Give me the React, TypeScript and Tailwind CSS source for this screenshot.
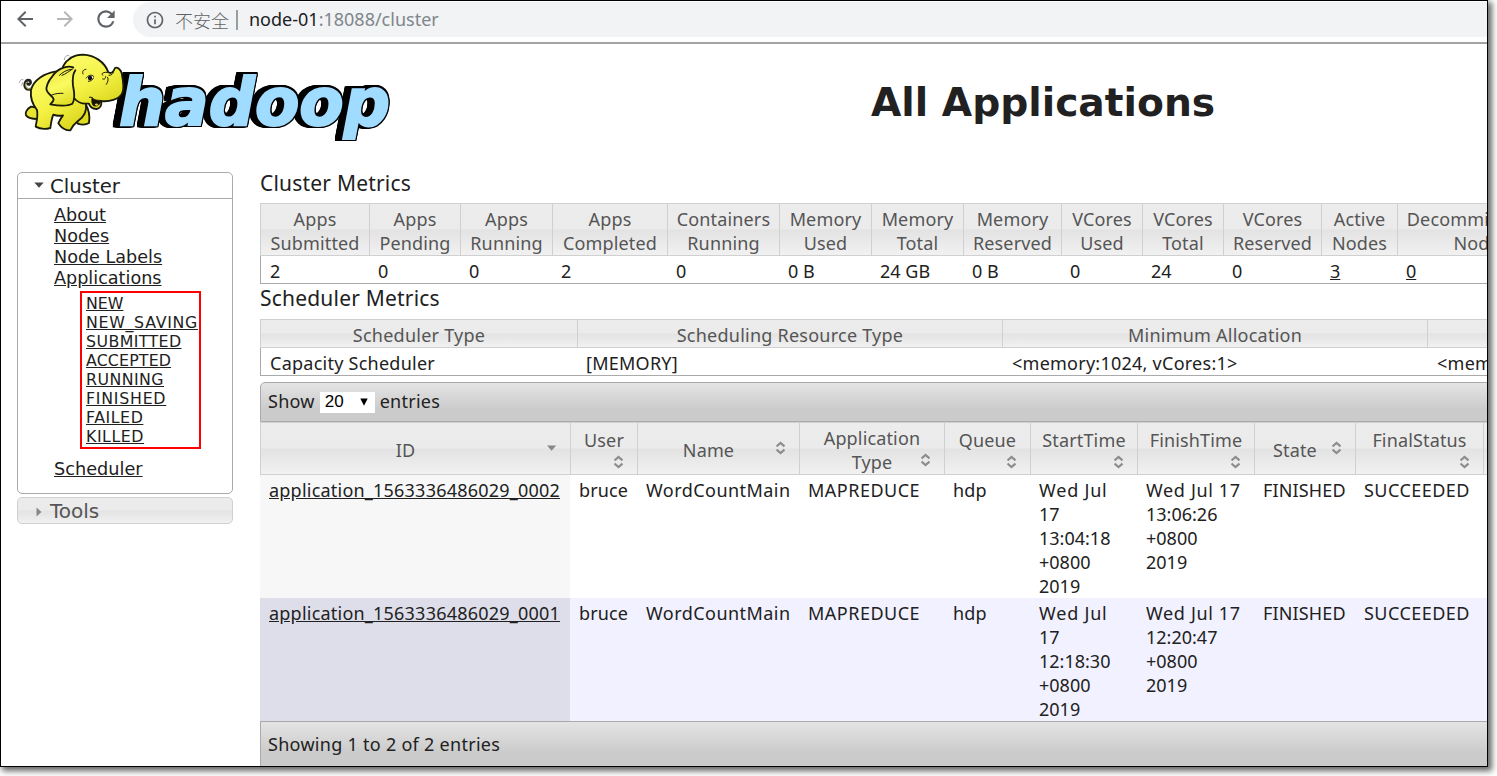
import React from "react";
import { MdArrowBack, MdArrowForward, MdInfoOutline, MdRefresh } from "react-icons/md";

const HEAD_BG =
  "bg-[linear-gradient(to_bottom,#ececec_0%,#ebebeb_48%,#e3e3e3_52%,#f1f1f1_100%)]";
const BAR_BG = "bg-[linear-gradient(to_bottom,#e4e4e4_0%,#cbcbcb_70%,#cbcbcb_100%)]";

const clusterMetrics = [
  { head: "Apps\nSubmitted", value: "2" },
  { head: "Apps\nPending", value: "0" },
  { head: "Apps\nRunning", value: "0" },
  { head: "Apps\nCompleted", value: "2" },
  { head: "Containers\nRunning", value: "0" },
  { head: "Memory\nUsed", value: "0 B" },
  { head: "Memory\nTotal", value: "24 GB" },
  { head: "Memory\nReserved", value: "0 B" },
  { head: "VCores\nUsed", value: "0" },
  { head: "VCores\nTotal", value: "24" },
  { head: "VCores\nReserved", value: "0" },
  { head: "Active\nNodes", value: "3", link: true },
  { head: "Decommissioned\nNodes", value: "0", link: true },
];

const schedulerMetrics = [
  { head: "Scheduler Type", value: "Capacity Scheduler" },
  { head: "Scheduling Resource Type", value: "[MEMORY]" },
  { head: "Minimum Allocation", value: "<memory:1024, vCores:1>" },
  { head: "", value: "<memory:8192, vCores:8>" },
];

type Kind = "row" | "stack" | "over";
const appColumns: { label: string; kind: Kind; sorted?: boolean }[] = [
  { label: "ID", kind: "row", sorted: true },
  { label: "User", kind: "stack" },
  { label: "Name", kind: "row" },
  { label: "Application\nType", kind: "over" },
  { label: "Queue", kind: "stack" },
  { label: "StartTime", kind: "stack" },
  { label: "FinishTime", kind: "stack" },
  { label: "State", kind: "row" },
  { label: "FinalStatus", kind: "stack" },
];

const apps = [
  {
    id: "application_1563336486029_0002",
    cells: ["bruce", "WordCountMain", "MAPREDUCE", "hdp", "Wed Jul\n17\n13:04:18\n+0800\n2019", "Wed Jul 17\n13:06:26\n+0800\n2019", "FINISHED", "SUCCEEDED"],
    idBg: "bg-[#f7f7f7]",
    bg: "bg-white",
  },
  {
    id: "application_1563336486029_0001",
    cells: ["bruce", "WordCountMain", "MAPREDUCE", "hdp", "Wed Jul\n17\n12:18:30\n+0800\n2019", "Wed Jul 17\n12:20:47\n+0800\n2019", "FINISHED", "SUCCEEDED"],
    idBg: "bg-[#dedeea]",
    bg: "bg-[#f1f1ff]",
  },
];

const CELL_SPACING = [
  "tracking-[0.1px]",
  "tracking-[0.45px]",
  "tracking-[0.5px]",
  "tracking-[0.2px]",
  "first-line:tracking-[0.8px]",
  "first-line:tracking-[0.65px]",
  "tracking-[0.15px]",
  "tracking-[0.45px]",
];

const APP_GRID =
  "grid grid-cols-[310px_67px_162px_145px_86px_107px_117px_101px_128px_60px]";

function SortIcon() {
  return (
    <svg className="block h-[14px] w-[10px] shrink-0" viewBox="0 0 10 14" fill="none" stroke="#8c8c8c" strokeWidth="2.1">
      <path d="M0.5 5.4 4.5 2 8.5 5.4M0.5 8.6 4.5 12 8.5 8.6" />
    </svg>
  );
}

function SortedIcon() {
  return (
    <svg className="block h-[14px] w-[10px] shrink-0" viewBox="0 0 10 14" fill="#888">
      <path d="M0 4.5h9.2L4.6 9.8z" />
    </svg>
  );
}

function HeaderCell({ label, kind, sorted }: { label: string; kind: Kind; sorted?: boolean }) {
  if (kind === "stack") {
    return (
      <div className="flex flex-col border-l border-[#d0d0d0] pt-[5px]">
        <span className="text-center">{label}</span>
        <span className="mt-[3px] self-end pr-[13px]">
          <SortIcon />
        </span>
      </div>
    );
  }
  if (kind === "over") {
    return (
      <div className="relative border-l border-[#d0d0d0] pt-[3px] text-center whitespace-pre-line">
        {label}
        <span className="absolute right-[13px] bottom-[7px]">
          <SortIcon />
        </span>
      </div>
    );
  }
  return (
    <div className="flex items-center border-l border-[#d0d0d0] pr-[13px] pb-[2px]">
      <span className="flex-1 pt-1 pl-[3px] text-center">{label}</span>
      {sorted ? <SortedIcon /> : <SortIcon />}
    </div>
  );
}

function Elephant() {
  return (
    <g transform="translate(-1 0) scale(0.33333)" stroke="#1a1a08" strokeWidth="5.5" strokeLinejoin="round" strokeLinecap="round">
      <path d="M66 132C50 138 43 124 50 110C54 103 64 104 65 112C65 119 58 120 56 116" fill="none" stroke="#222" strokeWidth="8" />
      <path d="M66 131C52 135 47 124 52 112" fill="none" stroke="#e8e552" strokeWidth="2.5" />
      <path d="M200 200L206 236C218 240 232 239 240 234C243 215 240 195 230 178Z" fill="#dfdc20" />
      <path d="M66 185C54 192 47 203 51 211C58 220 70 222 86 222L96 190Z" fill="#e6e333" />
      <path
        d="M138 80C105 86 74 104 66 135C63 160 72 180 84 195C88 214 82 230 80 245C92 252 110 253 124 249C126 234 128 220 133 209C143 213 153 213 162 211C156 219 151 226 148 235C157 249 171 257 184 256C190 244 197 236 206 229C222 218 234 200 231 178L240 120L180 75Z"
        fill="url(#hide)"
      />
      <path
        d="M162 64C176 39 197 29 222 29C258 31 287 51 298 82C308 88 314 79 318 69C324 65 334 72 338 84C342 104 347 133 339 146C329 164 300 171 276 168C280 181 273 190 263 192C250 191 242 184 240 176L231 176C218 177 203 169 195 159Z"
        fill="url(#hide)"
      />
      <path d="M249 159C257 165 265 166 275 166C276 177 265 187 253 182C248 175 247 169 249 159Z" fill="#171405" strokeWidth="2" />
      <path d="M257 178C262 173 267 176 268 180C264 184 260 183 257 178Z" fill="#d5c95b" stroke="none" />
      <path
        d="M193 67C170 60 143 73 130 94C117 108 110 128 113 136C118 151 132 152 134 163C133 170 127 174 124 178C142 181 173 186 190 176C201 160 195 139 192 122C190 104 191 88 199 76"
        fill="url(#ear)"
      />
      <path d="M187 73C174 74 160 82 151 91M192 71C180 79 169 88 159 91M126 151C141 144 154 145 162 145" fill="none" strokeWidth="3" />
      <path d="M222 87C219 79 222 74 231 73M241 157C244 155 248 156 252 160M295 82C283 81 275 85 281 91M281 102C288 105 290 98 290 94M296 97C299 102 297 112 292 118M300 91C308 91 311 87 313 82" fill="none" strokeWidth="3" />
      <ellipse cx="244" cy="99" rx="9" ry="7" fill="#fff" stroke="none" transform="rotate(20 244 99)" />
      <path d="M232 99C236 91 247 87 254 94M238 109C247 108 251 105 253 99" fill="none" strokeWidth="3" />
      <circle cx="243" cy="99" r="6.5" fill="#111" stroke="none" />
      <path d="M166 44C166 36 171 31 179 31M176 43L183 35M31 113C33 105 37 102 42 104M38 121L41 112" fill="none" stroke="#aaa" strokeWidth="3" />
    </g>
  );
}

function Logo() {
  return (
    <svg className="block h-[105px] w-[400px] overflow-visible" viewBox="0 0 400 105">
      <defs>
        <linearGradient id="hide" x1="0" y1="0" x2="0.6" y2="1">
          <stop offset="0" stopColor="#fdfd72" />
          <stop offset="0.6" stopColor="#f4f144" />
          <stop offset="1" stopColor="#dcd820" />
        </linearGradient>
        <linearGradient id="ear" x1="0.3" y1="0" x2="0.6" y2="1">
          <stop offset="0" stopColor="#e9e63c" />
          <stop offset="0.5" stopColor="#fafa62" />
          <stop offset="1" stopColor="#e0dc22" />
        </linearGradient>
      </defs>
      <text
        x="109"
        y="79.5"
        textLength="271"
        lengthAdjust="spacingAndGlyphs"
        className="fill-[#a0dcff] stroke-[#a0dcff] font-['DejaVu_Sans'] text-[65px] font-bold italic [filter:drop-shadow(1.3px_0_0_#000)_drop-shadow(-1.3px_0_0_#000)_drop-shadow(0_1.3px_0_#000)_drop-shadow(0_-1.3px_0_#000)_drop-shadow(-2px_0_0_#000)_drop-shadow(-3px_0_0_#000)]"
        strokeWidth="2"
        strokeLinejoin="miter"
      >
        hadoop
      </text>
      <Elephant />
    </svg>
  );
}

function Sidebar() {
  const states = [
    { t: "NEW", c: "tracking-[0px]" },
    { t: "NEW_SAVING", c: "tracking-[0.7px]" },
    { t: "SUBMITTED", c: "tracking-[0.4px]" },
    { t: "ACCEPTED", c: "tracking-[0.15px]" },
    { t: "RUNNING", c: "tracking-[0.45px]" },
    { t: "FINISHED", c: "tracking-[0.75px]" },
    { t: "FAILED", c: "tracking-[0.55px]" },
    { t: "KILLED", c: "tracking-[0.55px]" },
  ];
  return (
    <aside className="ml-4 w-[216px] shrink-0 font-['DejaVu_Sans',sans-serif] text-[#212121]">
      <div className="h-[322px] rounded-[5px] border border-[#aaa]">
        <div className="flex h-[26px] items-center border-b border-[#aaa] pt-[2px] pl-4 text-[19.7px]">
          <svg className="mr-[6px] mb-[3px] block h-[6px] w-[10px]" viewBox="0 0 10 6" fill="#454545">
            <path d="M0.3 0.5h9.4L5 5.7z" />
          </svg>
          Cluster
        </div>
        <ul className="pt-[6px] pl-9 text-[17.6px] leading-[21px]">
          {["About", "Nodes", "Node Labels", "Applications"].map((t) => (
            <li key={t}>
              <a className="underline">{t}</a>
            </li>
          ))}
        </ul>
        <ul className="mt-[2px] ml-[62px] h-[158px] w-[121px] border-2 border-[#f00] pt-[1px] pl-1 text-[15.8px] leading-[19px]">
          {states.map((s) => (
            <li key={s.t} className={s.c}>
              <a className="underline">{s.t}</a>
            </li>
          ))}
        </ul>
        <div className="mt-[10px] pl-9 text-[17.7px] leading-[21px]">
          <a className="underline">Scheduler</a>
        </div>
      </div>
      <div className={`mt-[3px] flex h-[27px] items-center rounded-[5px] border border-[#d0d0d0] pl-[18px] text-[20px] text-[#555] ${HEAD_BG}`}>
        <svg className="mt-[2px] mr-[8px] block h-[10px] w-[6px]" viewBox="0 0 6 10" fill="#888">
          <path d="M0.5 0.5v9L5.5 5z" />
        </svg>
        Tools
      </div>
    </aside>
  );
}

export default function App() {
  return (
    <div className="h-[776px] w-[1497px] overflow-hidden bg-white font-['Noto_Sans','Noto_Sans_CJK_SC',sans-serif] text-[18px] leading-6 text-[#212121]">
      <div className="flex h-[767px] w-[1488px] flex-col overflow-hidden border border-black bg-white shadow-[3px_3px_6px_1px_rgba(0,0,0,0.6)]">
        <header className="flex h-[43px] shrink-0 items-start border-b-2 border-[#a3a3a3] pt-[1px]">
          <div className="flex h-[34px] w-[132px] items-center pl-[12px] text-[#5f6368]">
            <MdArrowBack size={24} />
            <MdArrowForward size={24} className="ml-[16px] text-[#b4b6b8]" />
            <MdRefresh size={26} className="ml-[16px]" />
          </div>
          <div className="flex h-[35px] flex-1 items-center rounded-l-full bg-[#f1f3f4] pl-[12px] text-[#5f6368]">
            <MdInfoOutline size={20} />
            <span className="ml-[10px] font-['Noto_Sans_CJK_SC',sans-serif] text-[18px] font-light">不安全</span>
            <span className="ml-[7px] h-5 w-[2px] bg-[#9a9da0]" />
            <span className="mb-[2px] ml-[11px] text-[#80868b]">
              <span className="text-[#202124]">node-01</span>:18088/cluster
            </span>
          </div>
        </header>
        <div className="flex h-[128px] shrink-0 pt-[1px]">
          <div className="ml-[9px] w-[390px]">
            <Logo />
          </div>
          <h1 className="ml-[471px] pt-[34px] font-['DejaVu_Sans',sans-serif] text-[39.2px] leading-[48px] font-bold whitespace-nowrap">
            All Applications
          </h1>
        </div>
        <div className="flex flex-1">
          <Sidebar />
          <main className="ml-[27px] w-[1227px] shrink-0 overflow-hidden whitespace-nowrap">
            <h2 className="-mt-[1px] h-[32px] text-[21px] tracking-[0.2px]">Cluster Metrics</h2>
            <section className="w-[1304px]">
              <div className={`grid h-[53px] grid-cols-[109px_91px_92px_115px_112px_92px_92px_98px_81px_81px_98px_76px_167px] border-y border-[#d0d0d0] tracking-[0.15px] text-[#555] ${HEAD_BG}`}>
                {clusterMetrics.map((m) => (
                  <div key={m.head} className="border-l border-[#d0d0d0] pt-[3px] text-center whitespace-pre-line">
                    {m.head}
                  </div>
                ))}
              </div>
              <div className="grid h-7 grid-cols-[108px_91px_92px_115px_112px_92px_92px_98px_81px_81px_98px_76px_167px] border-b border-l border-[#aaa] pt-[3px]">
                {clusterMetrics.map((m) => (
                  <div key={m.head} className="pl-[9px]">
                    {m.link ? <a className="underline">{m.value}</a> : m.value}
                  </div>
                ))}
              </div>
            </section>
            <h2 className="h-[35px] pt-[2px] text-[21px] tracking-[0.2px]">Scheduler Metrics</h2>
            <section className="w-[1742px]">
              <div className={`grid h-[29px] grid-cols-[317px_425px_425px_425px] border-y border-[#d0d0d0] tracking-[0.24px] text-[#555] ${HEAD_BG}`}>
                {schedulerMetrics.map((m) => (
                  <div key={m.value} className="border-l border-[#d0d0d0] pt-[3px] text-center">
                    {m.head}
                  </div>
                ))}
              </div>
              <div className="grid h-7 grid-cols-[316px_426px_425px_425px] border-b border-l border-[#aaa] pt-[3px] tracking-[0.25px]">
                {schedulerMetrics.map((m) => (
                  <div key={m.value} className="pl-[9px]">
                    {m.value}
                  </div>
                ))}
              </div>
            </section>
            <section className="mt-[6px] w-[1283px]">
              <div className={`flex h-10 items-center rounded-tl-[5px] border border-[#aaa] pb-[2px] pl-[7px] tracking-[0.25px] ${BAR_BG}`}>
                Show
                <div className="mx-[5px] mt-[2px] flex h-[21px] w-[55px] items-center justify-between bg-white pr-[7px] pl-[5px] font-['Liberation_Sans',sans-serif] text-[17px] tracking-normal text-black">
                  20
                  <svg className="block h-[8px] w-[8px]" viewBox="0 0 8 8">
                    <path d="M0.3 0.5h7.4L4 7.8z" />
                  </svg>
                </div>
                entries
              </div>
              <div className={`h-[53px] border-y border-[#d0d0d0] tracking-[0.15px] text-[#555] ${APP_GRID} ${HEAD_BG}`}>
                {appColumns.map((c) => (
                  <HeaderCell key={c.label} {...c} />
                ))}
                <div className="border-l border-[#d0d0d0]" />
              </div>
              {apps.map((a) => (
                <div key={a.id} className={`h-[123px] ${APP_GRID} ${a.bg}`}>
                  <div className={`pt-[3px] pl-[9px] tracking-[0.22px] ${a.idBg}`}>
                    <a className="underline">{a.id}</a>
                  </div>
                  {a.cells.map((c, i) => (
                    <div key={i} className={`pt-[3px] pl-[9px] whitespace-pre-line ${CELL_SPACING[i]}`}>
                      {c}
                    </div>
                  ))}
                </div>
              ))}
              <div className={`h-[46px] border border-[#aaa] pt-[10px] pl-[7px] tracking-[0.28px] ${BAR_BG}`}>
                Showing 1 to 2 of 2 entries
              </div>
            </section>
          </main>
        </div>
      </div>
    </div>
  );
}
